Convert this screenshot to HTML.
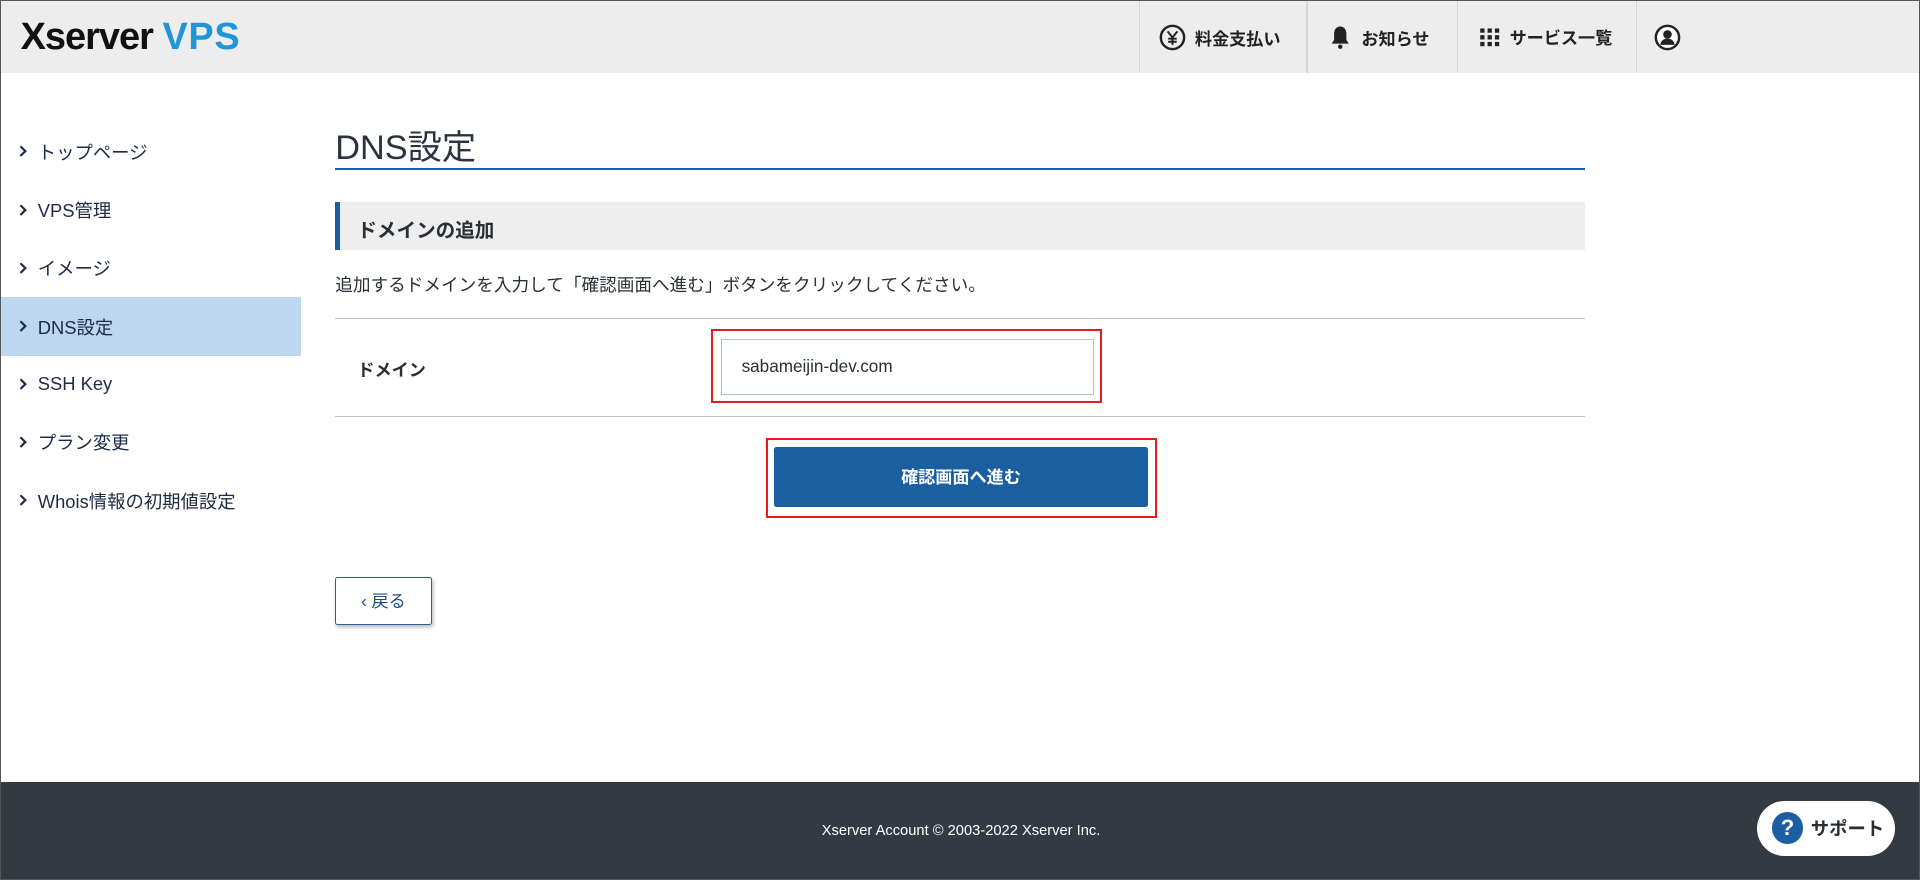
<!DOCTYPE html>
<html><head><meta charset="utf-8"><style>
html,body{margin:0;padding:0;width:1920px;height:880px;overflow:hidden;background:#fff}
#w{zoom:1.2245;width:1568px;height:719px;position:relative;font-family:"Liberation Sans","Noto Sans CJK JP",sans-serif;color:#2a2f36;box-sizing:border-box;border:1px solid #555;overflow:hidden}
.a{position:absolute}
#hd{left:0;top:0;width:1568px;height:59px;background:#ededed}
.logo{left:16px;top:12px;font-size:31px;font-weight:bold;letter-spacing:-0.8px;color:#111}
.logo span{color:#1f96d8;letter-spacing:0.5px}
.sep{top:0;width:1px;height:59px;background:#d6d6d6}
.hi{top:19px;font-size:14px;font-weight:bold;color:#222;display:flex;align-items:center;gap:7px}
.nav{left:0;width:245px;height:48px;font-size:15px;color:#1c2c44;display:flex;align-items:center}
.nav b{display:inline-block;width:30px;padding-left:14px;box-sizing:border-box}
</style></head><body><div id="w">
<div id="hd" class="a"></div>
<div class="a logo">Xserver <span>VPS</span></div>
<div class="a sep" style="left:929px"></div><div class="a sep" style="left:1066px"></div><div class="a sep" style="left:1189px"></div><div class="a sep" style="left:1335px"></div>
<div class="a hi" style="left:946px"><svg width="22" height="22" viewBox="0 0 22 22"><circle cx="11" cy="11" r="9.5" fill="none" stroke="#222" stroke-width="2"/><path d="M7 6l4 5 4-5M11 11v6M7.5 12h7M7.5 14.5h7" fill="none" stroke="#222" stroke-width="1.6"/></svg>料金支払い</div>
<div class="a hi" style="left:1084px"><svg width="20" height="22" viewBox="0 0 20 22"><path d="M10 2c-3.5 0-5 3-5 6v5l-2 3h14l-2-3V8c0-3-1.5-6-5-6z" fill="#222"/><circle cx="10" cy="18.5" r="1.8" fill="#222"/></svg>お知らせ</div>
<div class="a hi" style="left:1207px"><svg width="18" height="18" viewBox="0 0 18 18" fill="#222"><rect x="1" y="2" width="3.5" height="3.5"/><rect x="7" y="2" width="3.5" height="3.5"/><rect x="13" y="2" width="3.5" height="3.5"/><rect x="1" y="7.5" width="3.5" height="3.5"/><rect x="7" y="7.5" width="3.5" height="3.5"/><rect x="13" y="7.5" width="3.5" height="3.5"/><rect x="1" y="13" width="3.5" height="3.5"/><rect x="7" y="13" width="3.5" height="3.5"/><rect x="13" y="13" width="3.5" height="3.5"/></svg>サービス一覧</div>
<div class="a" style="left:1350px;top:19px"><svg width="22" height="22" viewBox="0 0 22 22"><circle cx="11" cy="11" r="9.5" fill="#fff" stroke="#222" stroke-width="2"/><circle cx="11" cy="8.5" r="3.5" fill="#222"/><path d="M5 17c1-4 3-5 6-5s5 1 6 5z" fill="#222"/></svg></div>

<div class="a nav" style="top:99px"><b><svg width="8" height="10" viewBox="0 0 8 10"><path d="M2 1l4 4-4 4" fill="none" stroke="#1c2c44" stroke-width="1.8"/></svg></b>トップページ</div>
<div class="a nav" style="top:147px"><b><svg width="8" height="10" viewBox="0 0 8 10"><path d="M2 1l4 4-4 4" fill="none" stroke="#1c2c44" stroke-width="1.8"/></svg></b>VPS管理</div>
<div class="a nav" style="top:194px"><b><svg width="8" height="10" viewBox="0 0 8 10"><path d="M2 1l4 4-4 4" fill="none" stroke="#1c2c44" stroke-width="1.8"/></svg></b>イメージ</div>
<div class="a nav" style="top:242px;background:#bcd7ef"><b><svg width="8" height="10" viewBox="0 0 8 10"><path d="M2 1l4 4-4 4" fill="none" stroke="#1c2c44" stroke-width="1.8"/></svg></b>DNS設定</div>
<div class="a nav" style="top:289px"><b><svg width="8" height="10" viewBox="0 0 8 10"><path d="M2 1l4 4-4 4" fill="none" stroke="#1c2c44" stroke-width="1.8"/></svg></b>SSH Key</div>
<div class="a nav" style="top:336px"><b><svg width="8" height="10" viewBox="0 0 8 10"><path d="M2 1l4 4-4 4" fill="none" stroke="#1c2c44" stroke-width="1.8"/></svg></b>プラン変更</div>
<div class="a nav" style="top:384px"><b><svg width="8" height="10" viewBox="0 0 8 10"><path d="M2 1l4 4-4 4" fill="none" stroke="#1c2c44" stroke-width="1.8"/></svg></b>Whois情報の初期値設定</div>

<div class="a" style="left:273px;top:96px;font-size:28px;color:#2a3440">DNS設定</div>
<div class="a" style="left:273px;top:136px;width:1021px;height:2px;background:#1c5fa0"></div>
<div class="a" style="left:273px;top:164px;width:1021px;height:39px;background:#eeeeee"></div>
<div class="a" style="left:273px;top:164px;width:4px;height:39px;background:#1c5fa0"></div>
<div class="a" style="left:291px;top:174px;font-size:16px;font-weight:bold;color:#2a2f36">ドメインの追加</div>
<div class="a" style="left:273px;top:221px;font-size:14.4px">追加するドメインを入力して「確認画面へ進む」ボタンをクリックしてください。</div>
<div class="a" style="left:273px;top:259px;width:1021px;height:1px;background:#c4c4c4"></div>
<div class="a" style="left:273px;top:339px;width:1021px;height:1px;background:#c4c4c4"></div>
<div class="a" style="left:291px;top:290px;font-size:14px;font-weight:bold">ドメイン</div>
<div class="a" style="left:581px;top:269px;width:316px;height:57px;border:2px solid #e8191d;box-sizing:content-box;margin:-1px"></div>
<div class="a" style="left:588px;top:276px;width:305px;height:46px;border:1px solid #a9c3dd;box-sizing:border-box;font-size:14px;padding:13px 0 0 16px">sabameijin-dev.com</div>
<div class="a" style="left:625px;top:357px;width:316px;height:62px;border:2px solid #e8191d"></div>
<div class="a" style="left:631px;top:364px;width:306px;height:49px;background:#1c5fa0;border-radius:2px;color:#fff;font-weight:bold;font-size:14px;text-align:center;line-height:49px">確認画面へ進む</div>
<div class="a" style="left:273px;top:470px;width:77px;height:38px;border:1px solid #2c5e9a;border-radius:2px;box-shadow:1px 2px 3px rgba(0,0,0,.25);color:#1c4f86;font-size:14px;text-align:center;line-height:38px">‹ 戻る</div>

<div class="a" style="left:0;top:638px;width:1568px;height:81px;background:#343a42"></div>
<div class="a" style="left:0;top:671px;width:1568px;text-align:center;color:#fff;font-size:12px">Xserver Account © 2003-2022 Xserver Inc.</div>
<div class="a" style="left:1434px;top:653px;width:113px;height:45px;background:#fff;border-radius:23px;display:flex;align-items:center;font-weight:bold;font-size:15px;color:#2a2f36"><span style="margin-left:12px;margin-right:6px;width:26px;height:26px;border-radius:50%;background:#1c5fa0;color:#fff;text-align:center;line-height:26px;font-size:18px">?</span>サポート</div>
</div></body></html>
